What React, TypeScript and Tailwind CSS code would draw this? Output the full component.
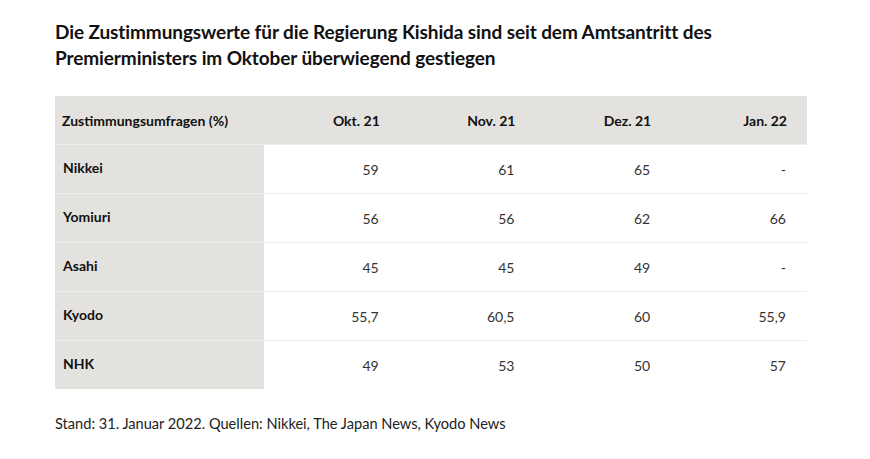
const months = ["Okt. 21", "Nov. 21", "Dez. 21", "Jan. 22"];

const rows: { name: string; values: string[] }[] = [
  { name: "Nikkei", values: ["59", "61", "65", "-"] },
  { name: "Yomiuri", values: ["56", "56", "62", "66"] },
  { name: "Asahi", values: ["45", "45", "49", "-"] },
  { name: "Kyodo", values: ["55,7", "60,5", "60", "55,9"] },
  { name: "NHK", values: ["49", "53", "50", "57"] },
];

export default function App() {
  return (
    <div className="w-[870px] h-[459px] bg-white pl-[55px] pt-[19px] font-['Lato','Noto_Sans',sans-serif] text-[#111]">
      <h1 className="text-[19px] leading-[26px] font-bold tracking-[-0.1px] w-[700px]">
        Die Zustimmungswerte für die Regierung Kishida sind seit dem Amtsantritt des
        Premierministers im Oktober überwiegend gestiegen
      </h1>

      <div className="mt-[25px] w-[752px]">
        <div className="grid grid-cols-[209px_repeat(4,1fr)] h-[48px] bg-[#e4e2df] items-center text-[14px] font-bold">
          <div className="pl-[7px]">Zustimmungsumfragen (%)</div>
          {months.map((m) => (
            <div key={m} className="text-right pr-[20px]">
              {m}
            </div>
          ))}
        </div>

        {rows.map((r) => (
          <div
            key={r.name}
            className="grid grid-cols-[209px_repeat(4,1fr)] h-[49px] items-center border-t border-[#ececec] first:h-[50px]"
          >
            <div className="h-full flex items-center pl-[8px] pb-[4px] bg-[#e4e2df] text-[14px] font-bold">
              {r.name}
            </div>
            {r.values.map((v, i) => (
              <div key={i} className="text-right pr-[21px] text-[14px] text-[#333]">
                {v}
              </div>
            ))}
          </div>
        ))}
      </div>

      <p className="mt-[24px] text-[14.6px] text-[#222]">
        Stand: 31. Januar 2022. Quellen: Nikkei, The Japan News, Kyodo News
      </p>
    </div>
  );
}
